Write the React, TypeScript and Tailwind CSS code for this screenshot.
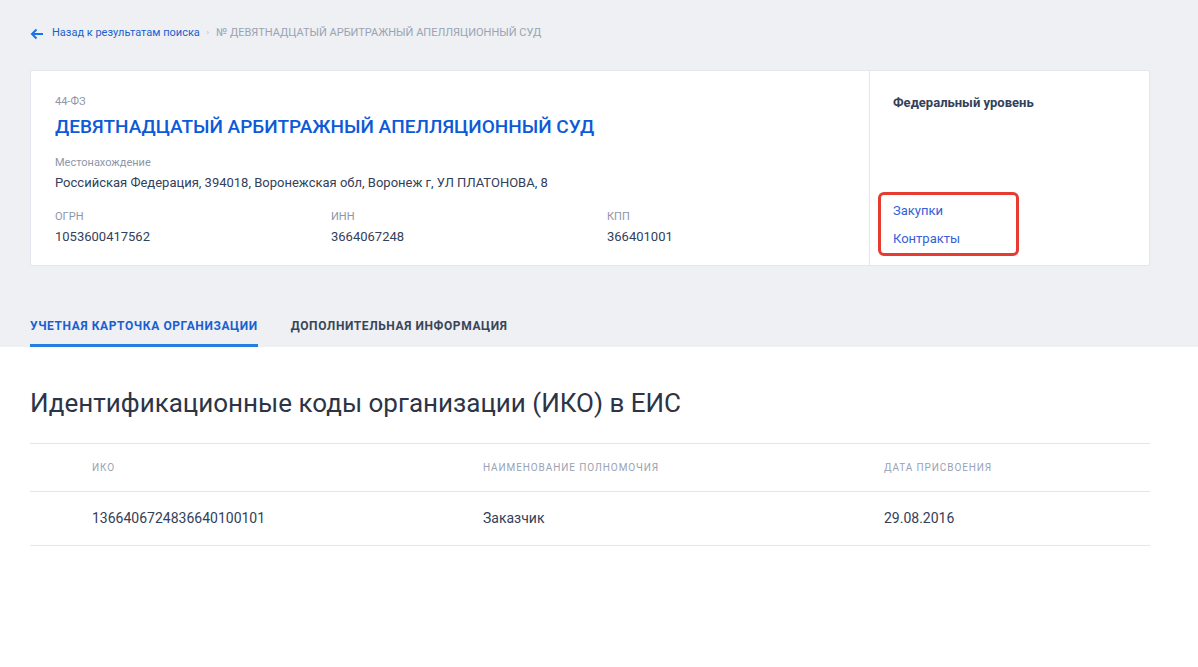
import React from 'react';

const font = { fontFamily: 'Roboto, "Noto Sans", Arial, sans-serif' };

const rows = [{ iko: '1366406724836640100101', role: 'Заказчик', date: '29.08.2016' }];

const Field: React.FC<{ label: string; value: string }> = ({ label, value }) => (
  <div className="flex flex-col">
    <span className="text-[11px] leading-[14px] text-[#8d96a8]">{label}</span>
    <span className="mt-[5px] text-[13px] leading-[16px] text-[#334059]">{value}</span>
  </div>
);

export default function App() {
  return (
    <div className="min-h-[667px] bg-white" style={font}>
      <div className="bg-[#eef0f3] px-[30px]">
        <div className="flex items-center h-[70px] pb-[3px] text-[11px]">
          <svg width="14" height="12" viewBox="0 0 14 12" className="mr-[8px]">
            <path d="M13 6H2.5M6.5 1.5L2 6l4.5 4.5" stroke="#1a73e8" strokeWidth="2" fill="none" />
          </svg>
          <span className="text-[#1a5fd0]">Назад к результатам поиска</span>
          <span className="mx-[7px] text-[7px] text-[#a0a8b8]">›</span>
          <span className="text-[#9aa3b4]">№ ДЕВЯТНАДЦАТЫЙ АРБИТРАЖНЫЙ АПЕЛЛЯЦИОННЫЙ СУД</span>
        </div>

        <div className="flex w-[1120px] bg-white border border-[#e3e6ee] rounded-[2px] h-[196px]">
          <div className="flex-1 min-w-0 pl-[24px] pt-[24px]">
            <div className="text-[11px] leading-[14px] text-[#8d96a8]">44-ФЗ</div>
            <div className="mt-[6px] text-[19px] leading-[24px] font-medium text-[#0d5ad8]">
              ДЕВЯТНАДЦАТЫЙ АРБИТРАЖНЫЙ АПЕЛЛЯЦИОННЫЙ СУД
            </div>
            <div className="mt-[17px]">
              <Field label="Местонахождение" value="Российская Федерация, 394018, Воронежская обл, Воронеж г, УЛ ПЛАТОНОВА, 8" />
            </div>
            <div className="mt-[19px] grid grid-cols-3 w-[828px]">
              <Field label="ОГРН" value="1053600417562" />
              <Field label="ИНН" value="3664067248" />
              <Field label="КПП" value="366401001" />
            </div>
          </div>
          <div className="w-[280px] shrink-0 border-l border-[#e3e6ee] pl-[23px] pt-[23px] pb-[9px] flex flex-col justify-between">
            <div className="text-[13px] leading-[18px] font-bold text-[#334059]">Федеральный уровень</div>
            <div className="-ml-[15px] w-[141px] border-[3px] border-[#e53b30] rounded-[6px] pl-[12px] pt-[6px] pb-[5px] flex flex-col gap-[9px] text-[13px] leading-[19px] text-[#3560d8]">
              <span>Закупки</span>
              <span>Контракты</span>
            </div>
          </div>
        </div>

        <div className="flex items-end gap-[33px] pt-[51px] text-[12px] font-bold tracking-[0.6px] uppercase">
          <div className="text-[#1a5fd0] pb-[9px] border-b-[3px] border-[#2180e0]">Учетная карточка организации</div>
          <div className="text-[#3a4458] pb-[12px]">Дополнительная информация</div>
        </div>
      </div>

      <div className="px-[30px] pt-[40px]">
        <h1 className="text-[26px] leading-[32px] font-normal text-[#2c3446]">
          Идентификационные коды организации (ИКО) в ЕИС
        </h1>
        <div className="mt-[24px] w-[1120px] border-t border-[#e3e6ee]">
          <div className="grid grid-cols-[391px_401px_1fr] pl-[62px] h-[48px] items-center border-b border-[#e3e6ee] text-[10px] tracking-[0.9px] uppercase text-[#99a2b4]">
            <span>ИКО</span>
            <span>Наименование полномочия</span>
            <span>Дата присвоения</span>
          </div>
          {rows.map((r) => (
            <div key={r.iko} className="grid grid-cols-[391px_401px_1fr] pl-[62px] h-[54px] items-center border-b border-[#e3e6ee] text-[14px] text-[#334059]">
              <span>{r.iko}</span>
              <span>{r.role}</span>
              <span>{r.date}</span>
            </div>
          ))}
        </div>
      </div>
    </div>
  );
}
